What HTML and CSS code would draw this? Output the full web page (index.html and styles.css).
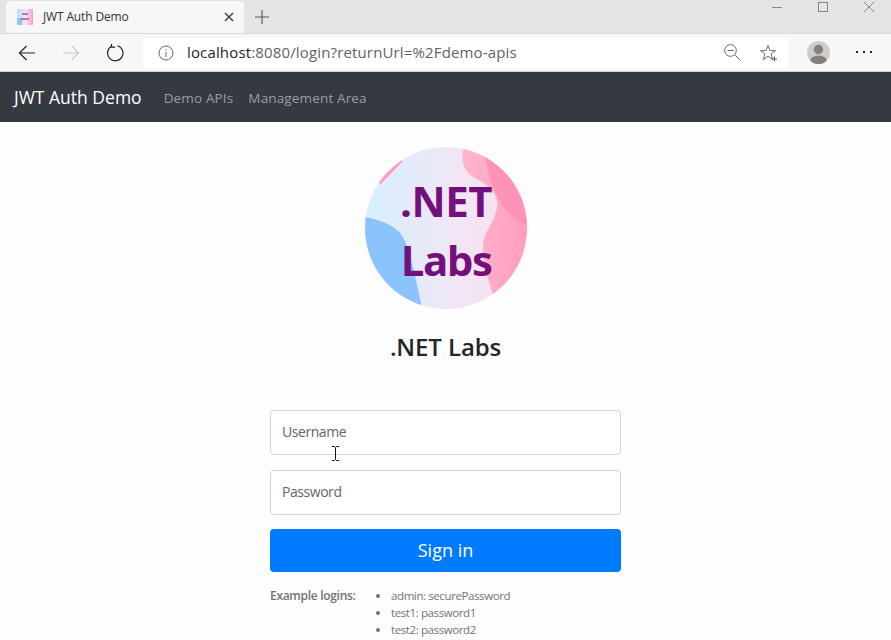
FILE: index.html
```html
<!DOCTYPE html>
<html lang="en">
<head>
<meta charset="utf-8">
<title>JWT Auth Demo</title>
<link rel="stylesheet" href="styles.css">
</head>
<body>
<div class="tabstrip">
  <div class="tab">
    <svg class="favicon" width="16" height="16" viewBox="0 0 16 16">
      <defs><linearGradient id="fav" x1="0" x2="1" y1="0" y2="0"><stop offset="0" stop-color="#b9def8"/><stop offset="0.55" stop-color="#f3e4f3"/><stop offset="1" stop-color="#ff9dbd"/></linearGradient></defs>
      <rect width="16" height="16" fill="url(#fav)"/>
      <rect x="0" y="9" width="5" height="7" fill="#8cc4fb"/>
      <rect x="5" y="4" width="6" height="2" fill="#7b2a85" opacity=".55"/>
      <rect x="4" y="9" width="8" height="2" fill="#7b2a85" opacity=".55"/>
    </svg>
    <span class="tab-title">JWT Auth Demo</span>
    <svg class="tab-close" width="10" height="10" viewBox="0 0 10 10"><path d="M1 1l8 8M9 1l-8 8" stroke="#4a3a4a" stroke-width="1.5" fill="none"/></svg>
  </div>
  <svg class="newtab" width="14" height="14" viewBox="0 0 14 14"><path d="M7 0v14M0 7h14" stroke="#555" stroke-width="1.1" fill="none"/></svg>
  <div class="winctl">
    <svg width="10" height="10" viewBox="0 0 10 10"><path d="M0 5.500h10" stroke="#8a8380" fill="none"/></svg>
    <svg width="10" height="10" viewBox="0 0 10 10"><rect x=".5" y=".5" width="9" height="9" stroke="#8a8380" fill="none"/></svg>
    <svg width="10" height="10" viewBox="0 0 10 10"><path d="M0 0l10 10M10 0L0 10" stroke="#8a8380" fill="none"/></svg>
  </div>
</div>
<div class="toolbar">
  <svg class="tool back" width="18" height="16" viewBox="0 0 18 16"><path d="M17 8H1.500M8.500 1L1.500 8l7 7" stroke="#222" stroke-width="1.2" fill="none"/></svg>
  <svg class="tool fwd" width="18" height="16" viewBox="0 0 18 16"><path d="M1 8h15.500M9.500 1l7 7-7 7" stroke="#c9c9c9" stroke-width="1.200" fill="none"/></svg>
  <svg class="tool reload" width="18" height="18" viewBox="0 0 18 18"><path d="M5.600 2.300A7.700 7.700 0 1 0 11.500 1.700M5.500 0v3.200H9" stroke="#222" stroke-width="1.200" fill="none"/></svg>
  <div class="addressbar">
    <svg class="info" width="16" height="16" viewBox="0 0 16 16"><circle cx="8" cy="8" r="7" stroke="#666" fill="none"/><path d="M8 7v5M8 4.200v1.300" stroke="#666" fill="none"/></svg>
    <span class="url"><span class="host">localhost</span>:8080/login?returnUrl=%2Fdemo-apis</span>
    <svg class="zoom-ic" width="17" height="17" viewBox="0 0 17 17"><circle cx="6.500" cy="6.500" r="5.800" stroke="#666" fill="none"/><path d="M3.500 6.500h6M10.800 10.800l5.700 5.700" stroke="#666" fill="none"/></svg>
    <svg class="star-ic" width="17" height="18" viewBox="0 0 17 18"><path d="M8 1.500l2 5.200h5.500l-4.400 3.400 1.600 5.400L8 12.300l-4.700 3.200 1.600-5.400L.5 6.700H6z" stroke="#666" fill="none"/><path d="M12 15h5M14.500 12.500v5" stroke="#555" fill="none"/></svg>
  </div>
  <svg class="avatar" width="23" height="23" viewBox="0 0 23 23">
    <defs><clipPath id="av"><circle cx="11.500" cy="11.500" r="11.500"/></clipPath></defs>
    <circle cx="11.500" cy="11.500" r="11.500" fill="#cfcdcc"/>
    <g clip-path="url(#av)" fill="#85807c"><circle cx="11.500" cy="8.500" r="4.700"/><ellipse cx="11.500" cy="20" rx="8.500" ry="5.500"/></g>
  </svg>
  <svg class="more" width="16" height="3" viewBox="0 0 16 3"><g fill="#222"><rect x="0" y="0" width="2" height="2"/><rect x="7" y="0" width="2" height="2"/><rect x="14" y="0" width="2" height="2"/></g></svg>
</div>
<nav class="navbar">
  <a class="brand">JWT Auth Demo</a>
  <a class="navlink">Demo APIs</a>
  <a class="navlink">Management Area</a>
</nav>
<main class="page">
  <svg class="logo" width="162" height="162" viewBox="0 0 162 162">
    <defs>
      <clipPath id="disc"><circle cx="81" cy="81" r="81"/></clipPath>
      <linearGradient id="bg" x1="0" x2="1" y1="0" y2="0"><stop offset="0" stop-color="#d6effe"/><stop offset="0.55" stop-color="#f1e6f5"/><stop offset="1" stop-color="#f9e0ec"/></linearGradient>
      <linearGradient id="pink" x1="0" x2="1" y1="0" y2="0"><stop offset="0" stop-color="#ffb6ce"/><stop offset="1" stop-color="#ff9dbd"/></linearGradient>
    </defs>
    <g clip-path="url(#disc)">
      <rect width="162" height="162" fill="url(#bg)"/>
      <path d="M0 70C20 74 34 80 40 94C47 110 51 135 57 160L0 162Z" fill="#8bc3fd"/>
      <path d="M98 0C96 14 98 24 108 30C124 38 134 46 132 60C130 76 118 84 118 100C118 116 122 130 128 147L162 162V0Z" fill="url(#pink)"/>
      <path d="M121 16C127 40 134 66 162 78V0H118Z" fill="#ff92b7"/>
      <path d="M12 35L36 12L38 14L16 37Z" fill="#ff9fc0"/>
    </g>
    <text class="logo-text" x="81" y="70" text-anchor="middle">.NET</text>
    <text class="logo-text logo-text-tight" x="81" y="129" text-anchor="middle">Labs</text>
  </svg>
  <h1 class="title">.NET Labs</h1>
  <form class="login">
    <div class="field">Username</div>
    <div class="field">Password</div>
    <div class="submit">Sign in</div>
    <div class="examples">
      <strong class="ex-label">Example logins:</strong>
      <ul class="ex-list">
        <li>admin: securePassword</li>
        <li>test1: password1</li>
        <li>test2: password2</li>
      </ul>
    </div>
  </form>
</main>
<svg class="ibeam" width="7" height="15" viewBox="0 0 7 15"><path d="M0 .5h2.500l1 1 1-1H7M0 14.500h2.500l1-1 1 1H7M3.500 1.500v12" stroke="#111" fill="none"/></svg>
</body>
</html>
```
FILE: styles.css
```css
* { box-sizing: border-box; }
html, body { margin: 0; padding: 0; height: 640px; overflow: hidden; }
body { position: relative; background: #fdfdfd; font-family: "Open Sans", "Noto Sans", sans-serif; color: #212529; }

.tabstrip { height: 33px; background: #e4e4e4; display: flex; align-items: flex-start; padding: 1px 0 0 6px; position: relative; }
.tab { width: 238px; height: 32px; background: #f7f7f7; border-radius: 4px 4px 0 0; display: flex; align-items: center; padding: 0 0 0 11px; }
.favicon { flex: none; }
.tab-title { font-size: 12px; color: #333; margin-left: 10px; flex: 1; letter-spacing: -.15px; margin-top: -1px; }
.tab-close { margin-right: 10px; margin-top: -1px; }
.newtab { margin: 9px 0 0 11px; }
.winctl { margin-left: auto; display: flex; gap: 36px; padding: 1px 17px 0 0; }

.toolbar { height: 39px; background: #f7f7f7; border-top: 1px solid #d9d9d9; border-bottom: 1px solid #d2d2d2; display: flex; align-items: center; }
.back { margin-left: 18px; }
.fwd { margin-left: 26px; }
.reload { margin-left: 26px; }
.addressbar { width: 645px; height: 30px; margin-left: 19px; background: #fff; border-radius: 4px; display: flex; align-items: center; padding: 0 11px 0 15px; }
.info { flex: none; }
.url { font-size: 15px; line-height: 20px; padding-bottom: 2px; color: #5f6368; margin-left: 13px; flex: 1; letter-spacing: .15px; white-space: nowrap; }
.host { color: #1f1f1f; }
.zoom-ic { margin-right: 19px; }
.star-ic { flex: none; margin-right: 0; }
.avatar { margin-left: 19px; }
.more { margin-left: 26px; }

.navbar { height: 50px; background: #343a40; display: flex; align-items: center; padding: 0 16px 0 14px; }
.brand { color: #fff; font-size: 17.500px; margin-right: 22px; }
.navlink { color: #9a9da0; font-size: 13.500px; margin-right: 15px; letter-spacing: .15px; padding-top: 1px; }

.page { display: flex; flex-direction: column; align-items: center; padding-top: 25px; }
.logo { display: block; flex: none; }
.logo-text { font-family: "Open Sans", sans-serif; font-weight: 700; font-size: 42px; fill: #74107c; letter-spacing: -.5px; }
.logo-text-tight { letter-spacing: -1.500px; }
.title { font-size: 24px; font-weight: 600; line-height: 29px; margin: 23px 0 49px; letter-spacing: -.1px; }

.login { width: 351px; display: flex; flex-direction: column; }
.field { height: 45px; border: 1px solid #ced4da; border-radius: 4px; background: #fff; padding: 0 11px 2px; display: flex; align-items: center; font-size: 14px; letter-spacing: -.45px; color: #5f666d; margin-bottom: 15px; }
.submit { height: 43px; margin-top: -1px; background: #007bff; color: #fff; border-radius: 4px; display: flex; align-items: center; justify-content: center; font-size: 18px; padding-bottom: 2px; }
.examples { display: flex; margin-top: 14.500px; font-size: 11.500px; line-height: 17.300px; color: #6c757d; }
.ex-label { width: 105px; flex: none; font-weight: 600; font-size: 12px; letter-spacing: -.3px; }
.ex-list { margin: 0; padding: 0 0 0 16px; letter-spacing: -.4px; }

.ibeam { position: absolute; left: 332px; top: 446px; }
```
